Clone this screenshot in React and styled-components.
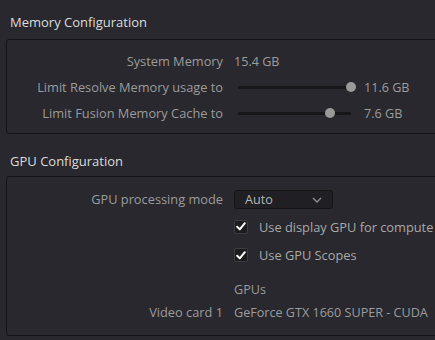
import React from "react";
import styled, { createGlobalStyle } from "styled-components";

const Global = createGlobalStyle`
  html, body { margin: 0; padding: 0; background: #28282e; }
  body { font-family: "Open Sans", "DejaVu Sans", sans-serif; overflow: hidden; }
`;

const Page = styled.div`
  width: 435px;
  height: 340px;
  overflow: hidden;
  background: #28282e;
  padding-top: 12px;
  box-sizing: border-box;
`;

const Title = styled.div`
  font-size: 13px;
  color: #dcdcdc;
  padding-left: 10px;
  height: 20px;
  line-height: 20px;
  margin-bottom: ${(p) => p.$gap}px;
`;

const Panel = styled.div`
  margin-left: 6px;
  width: 460px;
  border: 1px solid #141416;
  border-radius: 3px;
  padding: ${(p) => p.$pad};
  margin-bottom: ${(p) => p.$mb || 0}px;
  display: grid;
  grid-template-columns: 216px 1fr;
  column-gap: 11px;
  align-items: center;
`;

const Label = styled.div`
  text-align: right;
  font-size: 12.8px;
  color: #9c9c9c;
  height: ${(p) => p.$h}px;
  line-height: ${(p) => p.$h}px;
  white-space: nowrap;
`;

const Value = styled.div`
  display: flex;
  align-items: center;
  font-size: 12.6px;
  color: #9c9c9c;
  height: ${(p) => p.$h}px;
  margin-top: ${(p) => p.$mt || 0}px;
  white-space: nowrap;
`;

const SliderBox = styled.div`
  position: relative;
  height: 12px;
  margin-left: 4px;
  margin-right: 13px;
`;

const Track = styled.div`
  position: absolute;
  left: 0;
  right: 0;
  top: 5px;
  height: 3px;
  border-radius: 2px;
  background: #17171a;
`;

const Thumb = styled.div`
  position: absolute;
  top: 1px;
  width: 10px;
  height: 10px;
  border-radius: 50%;
  background: #9a9a9a;
  transform: translateX(-50%);
`;

const Select = styled.div`
  width: 97px;
  height: 17px;
  border: 1px solid #141416;
  border-radius: 3px;
  background: #202024;
  display: flex;
  align-items: center;
  justify-content: space-between;
  padding: 0 10px 0 10px;
  box-sizing: border-box;
  height: 19px;
  width: 99px;
  font-size: 12.6px;
  color: #b4b4b4;
`;

const CheckRow = styled.label`
  display: flex;
  align-items: center;
  gap: 11px;
  font-size: 12.8px;
  color: #a8a8a8;
  height: ${(p) => p.$h}px;
  white-space: nowrap;
`;

const Box = styled.span`
  width: 12px;
  height: 12px;
  border: 1px solid #3c3c42;
  border-radius: 2px;
  background: #1c1c1f;
  display: flex;
  align-items: center;
  justify-content: center;
  flex: none;
`;

const Slider = ({ frac, width }) => (
  <SliderBox style={{ width }}>
    <Track />
    <Thumb style={{ left: `${frac * 100}%` }} />
  </SliderBox>
);

const Check = () => (
  <Box>
    <svg width="10" height="9" viewBox="0 0 10 9">
      <path d="M1.2 4.8 L3.8 7.4 L8.8 1.2" stroke="#fff" strokeWidth="2" fill="none" strokeLinecap="round" strokeLinejoin="round" />
    </svg>
  </Box>
);

export default function App() {
  return (
    <Page>
      <Global />
      <Title $gap={7}>Memory Configuration</Title>
      <Panel $pad="8px 0 7px 0" $mb={17}>
        <Label $h={26}>System Memory</Label>
        <Value $h={26}>15.4 GB</Value>
        <Label $h={26}>Limit Resolve Memory usage to</Label>
        <Value $h={26}>
          <Slider frac={1} width={113} />
          <span>11.6 GB</span>
        </Value>
        <Label $h={26}>Limit Fusion Memory Cache to</Label>
        <Value $h={26}>
          <Slider frac={0.81} width={113} />
          <span>7.6 GB</span>
        </Value>
      </Panel>
      <Title $gap={5}>GPU Configuration</Title>
      <Panel $pad="12px 0 11px 0">
        <Label $h={21}>GPU processing mode</Label>
        <Value $h={21}>
          <Select>
            <span>Auto</span>
            <svg width="10" height="6" viewBox="0 0 10 6">
              <path d="M1 1 L5 5 L9 1" stroke="#8e8e8e" strokeWidth="1.4" fill="none" />
            </svg>
          </Select>
        </Value>
        <span />
        <CheckRow $h={33}>
          <Check />
          Use display GPU for compute
        </CheckRow>
        <span />
        <CheckRow $h={24}>
          <Check />
          Use GPU Scopes
        </CheckRow>
        <span />
        <Value $h={24} $mt={10}>GPUs</Value>
        <Label $h={23}>Video card 1</Label>
        <Value $h={23}>GeForce GTX 1660 SUPER - CUDA</Value>
      </Panel>
    </Page>
  );
}
